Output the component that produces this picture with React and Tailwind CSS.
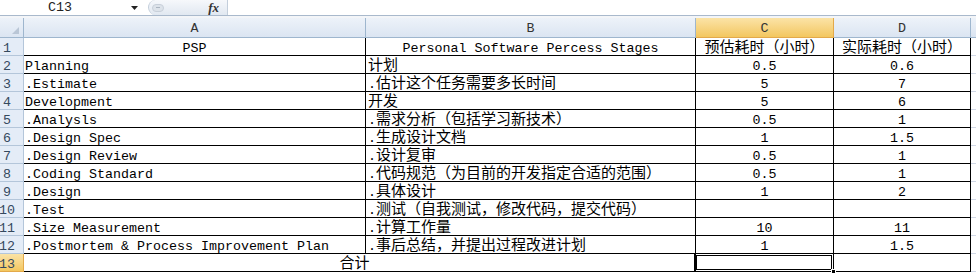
import React from "react";

const rows = [
  ["Planning", "计划", "0.5", "0.6"],
  [".Estimate", ".估计这个任务需要多长时间", "5", "7"],
  ["Development", "开发", "5", "6"],
  [".Analysls", ".需求分析（包括学习新技术）", "0.5", "1"],
  [".Design Spec", ".生成设计文档", "1", "1.5"],
  [".Design Review", ".设计复审", "0.5", "1"],
  [".Coding Standard", ".代码规范（为目前的开发指定合适的范围）", "0.5", "1"],
  [".Design", ".具体设计", "1", "2"],
  [".Test", ".测试（自我测试，修改代码，提交代码）", "", ""],
  [".Size Measurement", ".计算工作量", "10", "11"],
  [".Postmortem & Process Improvement Plan", ".事后总结，并提出过程改进计划", "1", "1.5"],
];

const grid = "grid grid-cols-[24px_342px_330px_138px_137px_1fr]";
const cell = "flex items-end border-r border-b border-black whitespace-nowrap";
const rowHead =
  "flex items-end justify-center pr-[9px] bg-[#e4ecf7] border-r border-b border-[#b4c6da] text-[#34495e]";

// split ascii and CJK runs so each gets its own font
function Txt({ s }) {
  const parts = s.match(/[\x00-\x7f]+|[^\x00-\x7f]+/g) || [];
  return (
    <div className="leading-[12px]">
      {parts.map((p, i) =>
        /^[\x00-\x7f]/.test(p) ? (
          <span key={i} className="leading-[12px]">
            {p}
          </span>
        ) : (
          <span key={i} className="font-['Noto_Sans_CJK_SC',sans-serif] text-[15px] leading-[12px]">
            {p}
          </span>
        )
      )}
    </div>
  );
}

function ColHead({ label, active }) {
  return (
    <div
      className={
        active
          ? "flex items-end justify-center pb-[2px] bg-linear-to-b from-[#fbe3a6] to-[#f3c75e] border-r border-b border-[#e3a94a] text-[#333]"
          : "flex items-end justify-center pb-[2px] bg-linear-to-b from-[#edf2f9] to-[#dbe5f2] border-r border-b border-[#9eb6ce] text-[#333]"
      }
    >
      <div className="leading-[12px]">{label}</div>
    </div>
  );
}

export default function App() {
  return (
    <div className="w-[976px] h-[273px] bg-white overflow-hidden font-['Liberation_Mono',monospace] text-[13.33px] text-black">
      {/* formula bar */}
      <div className="h-[16px] flex border-b border-[#a9b9cc]">
        <div className="w-[120px] flex items-end justify-center pb-[1px]">
          <div className="leading-[12px] text-[#222]">C13</div>
        </div>
        <div className="w-[28px] flex items-center justify-center">
          <svg width="7" height="4" viewBox="0 0 7 4">
            <polygon points="0,0 7,0 3.5,4" fill="#222" />
          </svg>
        </div>
        <div className="w-[80px] flex items-center rounded-l-[8px] bg-linear-to-b from-[#f6f8fb] to-[#e1e8f1] border-l border-[#c3cedb] border-r">
          <div className="ml-[3px] w-[12px] h-[8px] rounded-full bg-[#dde3ea] border border-[#c8d0da] flex items-center justify-center">
            <div className="w-[4px] h-[1px] bg-[#aab4c0]" />
          </div>
          <div className="ml-auto mr-[8px] font-['Liberation_Serif',serif] italic font-bold text-[13px] leading-[12px] text-[#333]">
            fx
          </div>
        </div>
        <div className="flex-1 bg-white" />
      </div>
      <div className="h-[2px] bg-[#f3f5f8]" />

      {/* column headers */}
      <div className={`${grid} h-[20px]`}>
        <div className="relative bg-linear-to-b from-[#edf2f9] to-[#dbe5f2] border-r border-b border-[#9eb6ce]">
          <svg className="absolute right-[4px] bottom-[3px]" width="7" height="7" viewBox="0 0 7 7">
            <polygon points="7,0 7,7 0,7" fill="#b9c6d6" />
          </svg>
        </div>
        <ColHead label="A" />
        <ColHead label="B" />
        <ColHead label="C" active />
        <ColHead label="D" />
        <div className="bg-linear-to-b from-[#edf2f9] to-[#dbe5f2] border-b border-[#9eb6ce]" />
      </div>

      {/* row 1 */}
      <div className={`${grid} h-[18px]`}>
        <div className={rowHead}>
          <div className="leading-[12px]">1</div>
        </div>
        <div className={`${cell} justify-center`}>
          <Txt s="PSP" />
        </div>
        <div className={`${cell} justify-center`}>
          <Txt s="Personal Software Percess Stages" />
        </div>
        <div className={`${cell} justify-center`}>
          <Txt s="预估耗时（小时）" />
        </div>
        <div className={`${cell} justify-center`}>
          <Txt s="实际耗时（小时）" />
        </div>
        <div className="border-b border-[#d0d7e5]" />
      </div>

      {rows.map((r, i) => (
        <div key={i} className={`${grid} h-[18px]`}>
          <div className={rowHead}>
            <div className="leading-[12px]">{i + 2}</div>
          </div>
          <div className={`${cell} pl-[1px]`}>
            <Txt s={r[0]} />
          </div>
          <div className={`${cell} pl-[2px]`}>
            <Txt s={r[1]} />
          </div>
          <div className={`${cell} justify-center`}>
            <Txt s={r[2]} />
          </div>
          <div className={`${cell} justify-center`}>
            <Txt s={r[3]} />
          </div>
          <div className="border-b border-[#d0d7e5]" />
        </div>
      ))}

      {/* row 13 */}
      <div className={`${grid} h-[18px]`}>
        <div className="flex items-end justify-center pr-[9px] bg-linear-to-b from-[#fbe3a6] to-[#f3c75e] border-r border-b border-[#e3a94a] text-[#34495e]">
          <div className="leading-[12px]">13</div>
        </div>
        <div className={`${cell} col-span-2 justify-center pr-[10px]`}>
          <Txt s="合计" />
        </div>
        <div className={`${cell} relative`}>
          <div className="absolute left-[-2px] top-[-1px] right-[-1px] bottom-[-1px] border-[3px] border-double border-black" />
          <div className="absolute right-[-3px] bottom-[-3px] w-[5px] h-[5px] bg-black border border-white" />
        </div>
        <div className={cell} />
        <div className="border-b border-[#d0d7e5]" />
      </div>
    </div>
  );
}
